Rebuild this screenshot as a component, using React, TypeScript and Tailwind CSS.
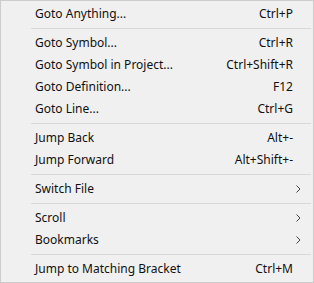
import React from "react";

type Item = { label: string; shortcut?: string; submenu?: boolean };

const groups: Item[][] = [
  [{ label: "Goto Anything...", shortcut: "Ctrl+P" }],
  [
    { label: "Goto Symbol...", shortcut: "Ctrl+R" },
    { label: "Goto Symbol in Project...", shortcut: "Ctrl+Shift+R" },
    { label: "Goto Definition...", shortcut: "F12" },
    { label: "Goto Line...", shortcut: "Ctrl+G" },
  ],
  [
    { label: "Jump Back", shortcut: "Alt+-" },
    { label: "Jump Forward", shortcut: "Alt+Shift+-" },
  ],
  [{ label: "Switch File", submenu: true }],
  [
    { label: "Scroll", submenu: true },
    { label: "Bookmarks", submenu: true },
  ],
  [{ label: "Jump to Matching Bracket", shortcut: "Ctrl+M" }],
];

function Chevron() {
  return (
    <svg width="5" height="8" viewBox="0 0 5 8">
      <path d="M0.5 0.5 L4 4 L0.5 7.5" fill="none" stroke="#444" strokeWidth="1" />
    </svg>
  );
}

function MenuRow({ item }: { item: Item }) {
  return (
    <div
      className={`flex h-[22px] items-center justify-between pl-[34px] ${
        item.submenu ? "pr-[12px]" : "pr-[20px]"
      }`}
    >
      <span>{item.label}</span>
      {item.shortcut && <span>{item.shortcut}</span>}
      {item.submenu && <Chevron />}
    </div>
  );
}

export default function App() {
  return (
    <div
      className="w-[314px] h-[283px] border border-[#cccccc] bg-[#f0f0f0] py-[2px] text-[12px] text-[#111111]"
      style={{ fontFamily: '"Noto Sans", "Liberation Sans", sans-serif' }}
    >
      {groups.map((g, i) => (
        <div key={i}>
          {i > 0 && (
            <div className="py-[3px] pl-[30px] pr-[2px]">
              <div className="h-px bg-[#d7d7d7]" />
            </div>
          )}
          {g.map((item) => (
            <MenuRow key={item.label} item={item} />
          ))}
        </div>
      ))}
    </div>
  );
}
